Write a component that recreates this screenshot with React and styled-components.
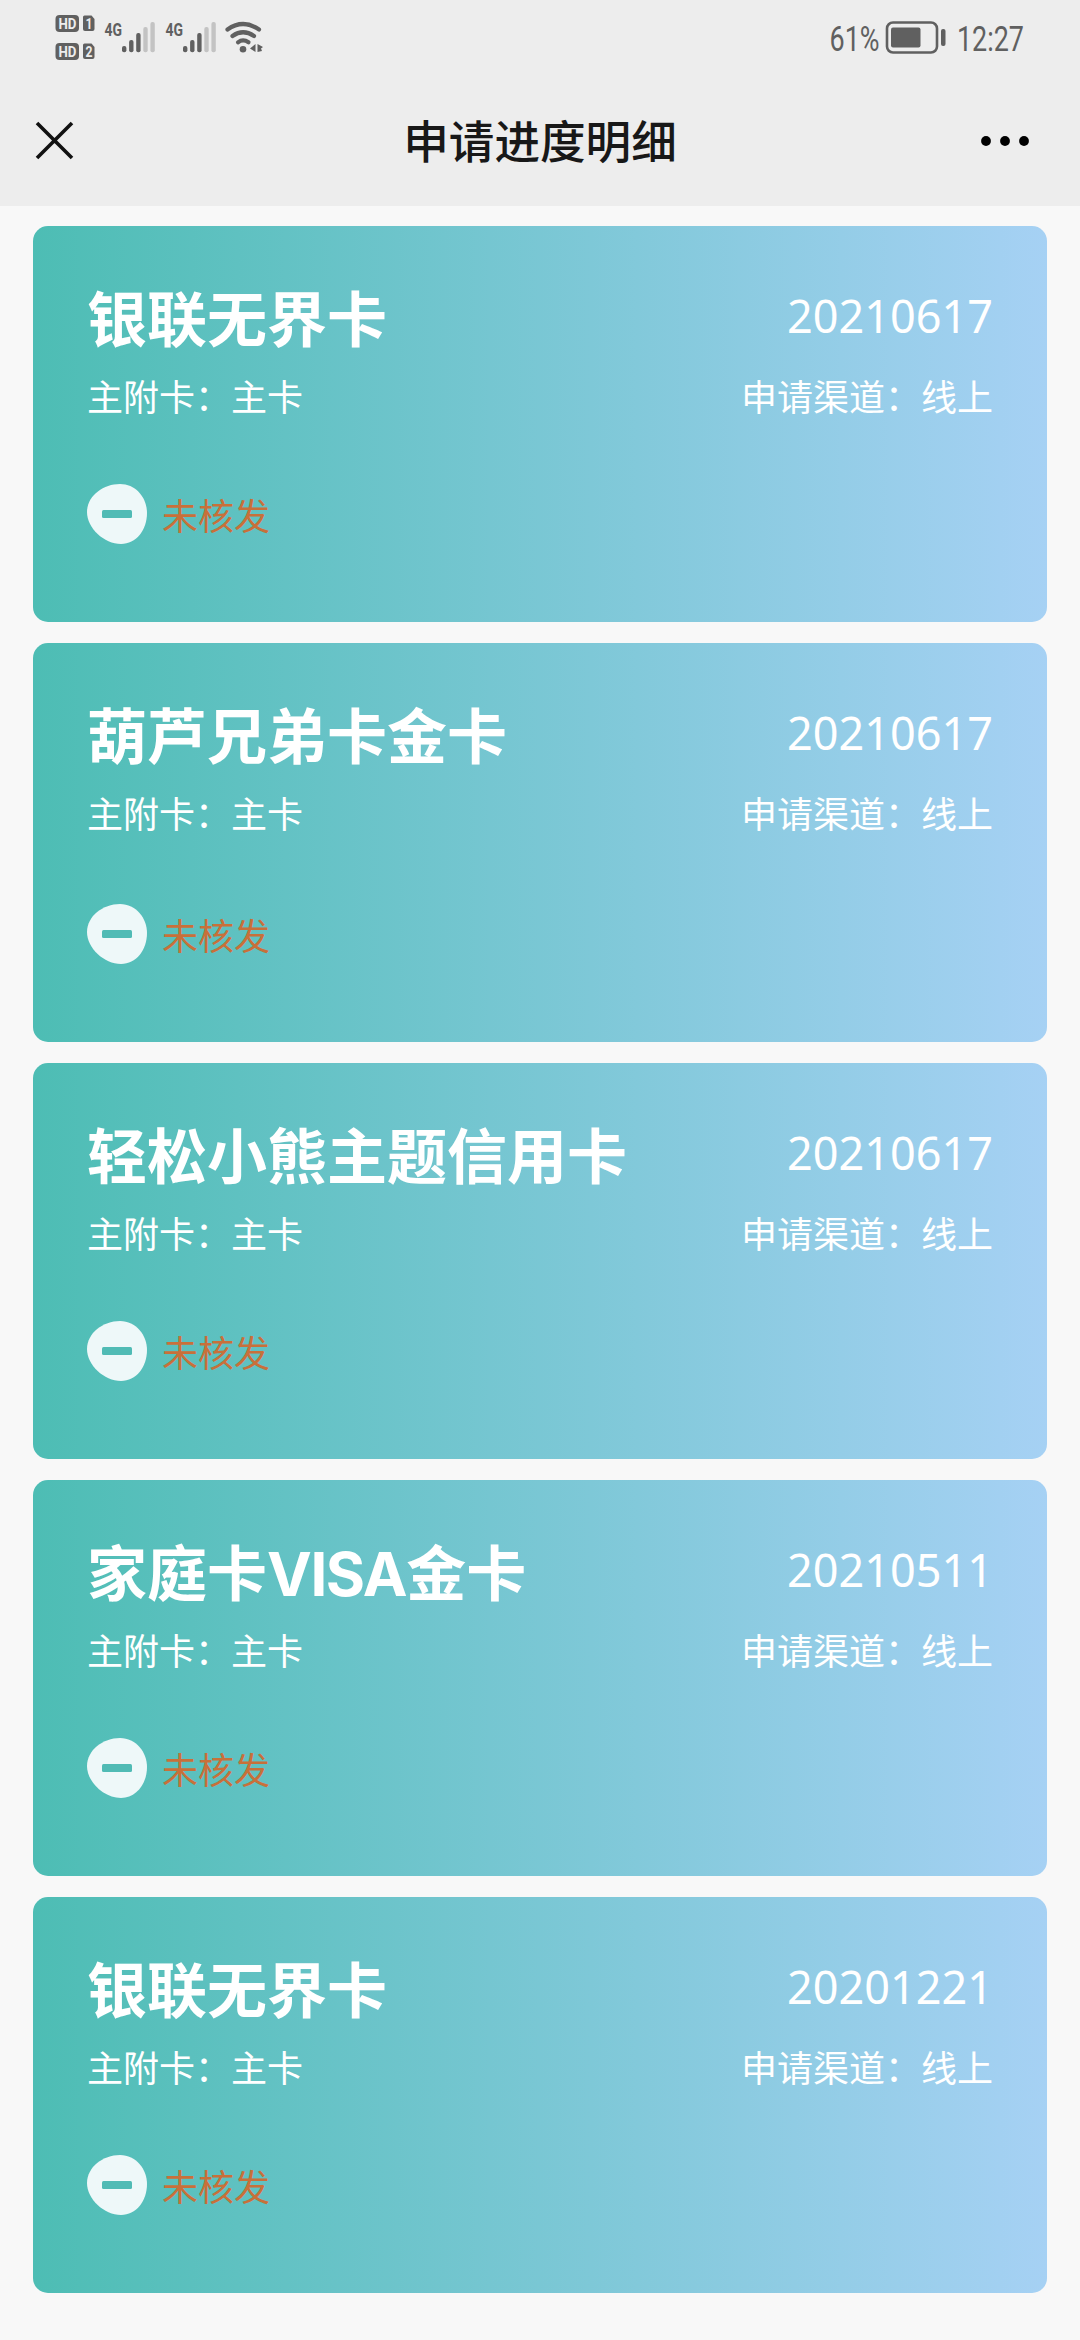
import styled, { createGlobalStyle } from 'styled-components';

const GlobalStyle = createGlobalStyle`
  * {
    box-sizing: border-box;
  }
  body {
    margin: 0;
    background: #f8f8f8;
    font-family: 'Noto Sans', 'Noto Sans CJK SC', sans-serif;
  }
`;

const Page = styled.div`
  width: 1080px;
  min-height: 2340px;
  background: #f8f8f8;
`;

const Header = styled.header`
  height: 206px;
  background: #ededed;
`;

const StatusBar = styled.div`
  display: flex;
  justify-content: space-between;
  height: 76px;
  padding: 0 13px 0 54px;

  svg {
    display: block;
  }
`;

const NavBar = styled.div`
  display: grid;
  grid-template-columns: 1fr auto 1fr;
  align-items: center;
  height: 129px;
  padding: 0 50px 0 35px;
`;

const NavTitle = styled.h1`
  margin: 0 0 3px 15px;
  font: 500 45.6px/60px 'Noto Sans CJK SC', sans-serif;
  color: #181818;
`;

const NavButton = styled.button`
  display: flex;
  justify-self: ${({ $end }) => ($end ? 'end' : 'start')};
  padding: 0;
  border: 0;
  background: none;
`;

const List = styled.main`
  display: flex;
  flex-direction: column;
  gap: 21px;
  padding: 20px 33px 47px;
`;

const Card = styled.section`
  height: ${({ $tall }) => ($tall ? 399 : 396)}px;
  padding: 55px 54px 0;
  border-radius: 15px;
  background: linear-gradient(90deg, #4dbdb4, #a6d1f4);
  color: #fff;
`;

const Row = styled.div`
  display: flex;
  justify-content: space-between;
  align-items: center;
`;

const CardName = styled.h2`
  margin: 0;
  font: 700 60px/78px 'Inter', 'Noto Sans CJK SC', sans-serif;
`;

const Latin = styled.span`
  letter-spacing: -1.4px;
`;

const ApplyDate = styled.span`
  padding-bottom: 8px;
  font-size: 45px;
  line-height: 70px;
`;

const Info = styled.span`
  margin-top: 9px;
  font: 400 36px/54px 'Noto Sans CJK SC', sans-serif;
`;

const Status = styled.div`
  display: flex;
  align-items: center;
  gap: 15px;
  margin-top: ${({ $tall }) => ($tall ? 65 : 62)}px;
  font: 400 36px/54px 'Noto Sans CJK SC', sans-serif;
  color: #c8703a;
`;

const cards = [
  { name: '银联无界卡', date: '20210617' },
  { name: '葫芦兄弟卡金卡', date: '20210617', tall: true },
  { name: '轻松小熊主题信用卡', date: '20210617' },
  { name: '家庭卡VISA金卡', date: '20210511' },
  { name: '银联无界卡', date: '20201221' },
];

function HdBadge({ y, sim }) {
  return (
    <g transform={`translate(0 ${y})`}>
      <rect x="1.5" y="0" width="23.5" height="17" rx="4" fill="#606060" />
      <text x="4.5" y="14" fontSize="15" fontWeight="700" fill="#ededed" textLength="18" lengthAdjust="spacingAndGlyphs">
        HD
      </text>
      <path d="M30.5 0.5H37.5L40.5 4V14Q40.5 16 38.5 16H31Q29 16 29 14V2Q29 0.5 30.5 0.5Z" fill="#606060" />
      <text x="31.5" y="13.5" fontSize="14" fontWeight="700" fill="#ededed" textLength="7" lengthAdjust="spacingAndGlyphs">
        {sim}
      </text>
    </g>
  );
}

function Signal({ x }) {
  return (
    <g transform={`translate(${x} 0)`}>
      <text x="0" y="35.5" fontSize="19" fontWeight="700" fill="#606060" textLength="17.5" lengthAdjust="spacingAndGlyphs">
        4G
      </text>
      {[46, 40, 33, 27, 22].map((top, i) => (
        <rect key={top} x={17.5 + i * 7.1} y={top} width="4.4" height={52.3 - top} rx="2" fill={i < 3 ? '#606060' : '#c3c3c3'} />
      ))}
    </g>
  );
}

function NetworkIcons() {
  return (
    <svg width="220" height="76" fontFamily="Roboto, sans-serif">
      <HdBadge y={15} sim="1" />
      <HdBadge y={43} sim="2" />
      <Signal x={50.5} />
      <Signal x={111.5} />
      <g fill="none" stroke="#606060" strokeWidth="4.2" strokeLinecap="round">
        <path d="M173.5 29.5Q189 18.5 205 29.5" />
        <path d="M178.5 36Q189 28.5 200 36" />
        <path d="M184 42.3Q189 38.5 194.5 42.3" />
      </g>
      <circle cx="189" cy="49.3" r="3.3" fill="#606060" />
      <path d="M201.5 44V52L196 48.5Z M203.5 44L209 47L207 48.5L208 51L203.5 52Z" fill="#606060" />
    </svg>
  );
}

function BatteryAndTime() {
  return (
    <svg width="240" height="76" fontFamily="Roboto, sans-serif" fontSize="35" fill="#606060">
      <text x="2.5" y="51" textLength="50" lengthAdjust="spacingAndGlyphs">
        61%
      </text>
      <rect x="60" y="22.5" width="50" height="30" rx="6" fill="none" stroke="#606060" strokeWidth="2.6" />
      <rect x="64" y="27.5" width="29.5" height="20" rx="2" />
      <rect x="114" y="29" width="4.5" height="17" rx="2" />
      <text x="130" y="51" textLength="67" lengthAdjust="spacingAndGlyphs">
        12:27
      </text>
    </svg>
  );
}

function MinusIcon() {
  return (
    <svg width="60" height="60" viewBox="0 0 60 60">
      <path d="M33 0C49 0 60 14 60 29C60 46 49 60 34 60C17 60 0 44 0 28C0 12 16 0 33 0Z" fill="#eef8f9" />
      <rect x="15" y="26" width="30" height="8" rx="1.5" fill="#50bbb5" />
    </svg>
  );
}

function App() {
  return (
    <Page>
      <GlobalStyle />
      <Header>
        <StatusBar>
          <NetworkIcons />
          <BatteryAndTime />
        </StatusBar>
        <NavBar>
          <NavButton aria-label="关闭">
            <svg width="39" height="39" stroke="#111" strokeWidth="3.6">
              <path d="M2 2L37 37M37 2L2 37" />
            </svg>
          </NavButton>
          <NavTitle>申请进度明细</NavTitle>
          <NavButton $end aria-label="更多">
            <svg width="50" height="12">
              <circle cx="6" cy="6" r="4.9" />
              <circle cx="25" cy="6" r="4.9" />
              <circle cx="44" cy="6" r="4.9" />
            </svg>
          </NavButton>
        </NavBar>
      </Header>
      <List>
        {cards.map(({ name, date, tall }, i) => (
          <Card key={i} $tall={tall}>
            <Row>
              <CardName>
                {name.split(/([A-Z]+)/).map((part, j) => (j % 2 ? <Latin key={j}>{part}</Latin> : part))}
              </CardName>
              <ApplyDate>{date}</ApplyDate>
            </Row>
            <Row>
              <Info>主附卡：主卡</Info>
              <Info>申请渠道：线上</Info>
            </Row>
            <Status $tall={tall}>
              <MinusIcon />
              <span>未核发</span>
            </Status>
          </Card>
        ))}
      </List>
    </Page>
  );
}

export default App;
